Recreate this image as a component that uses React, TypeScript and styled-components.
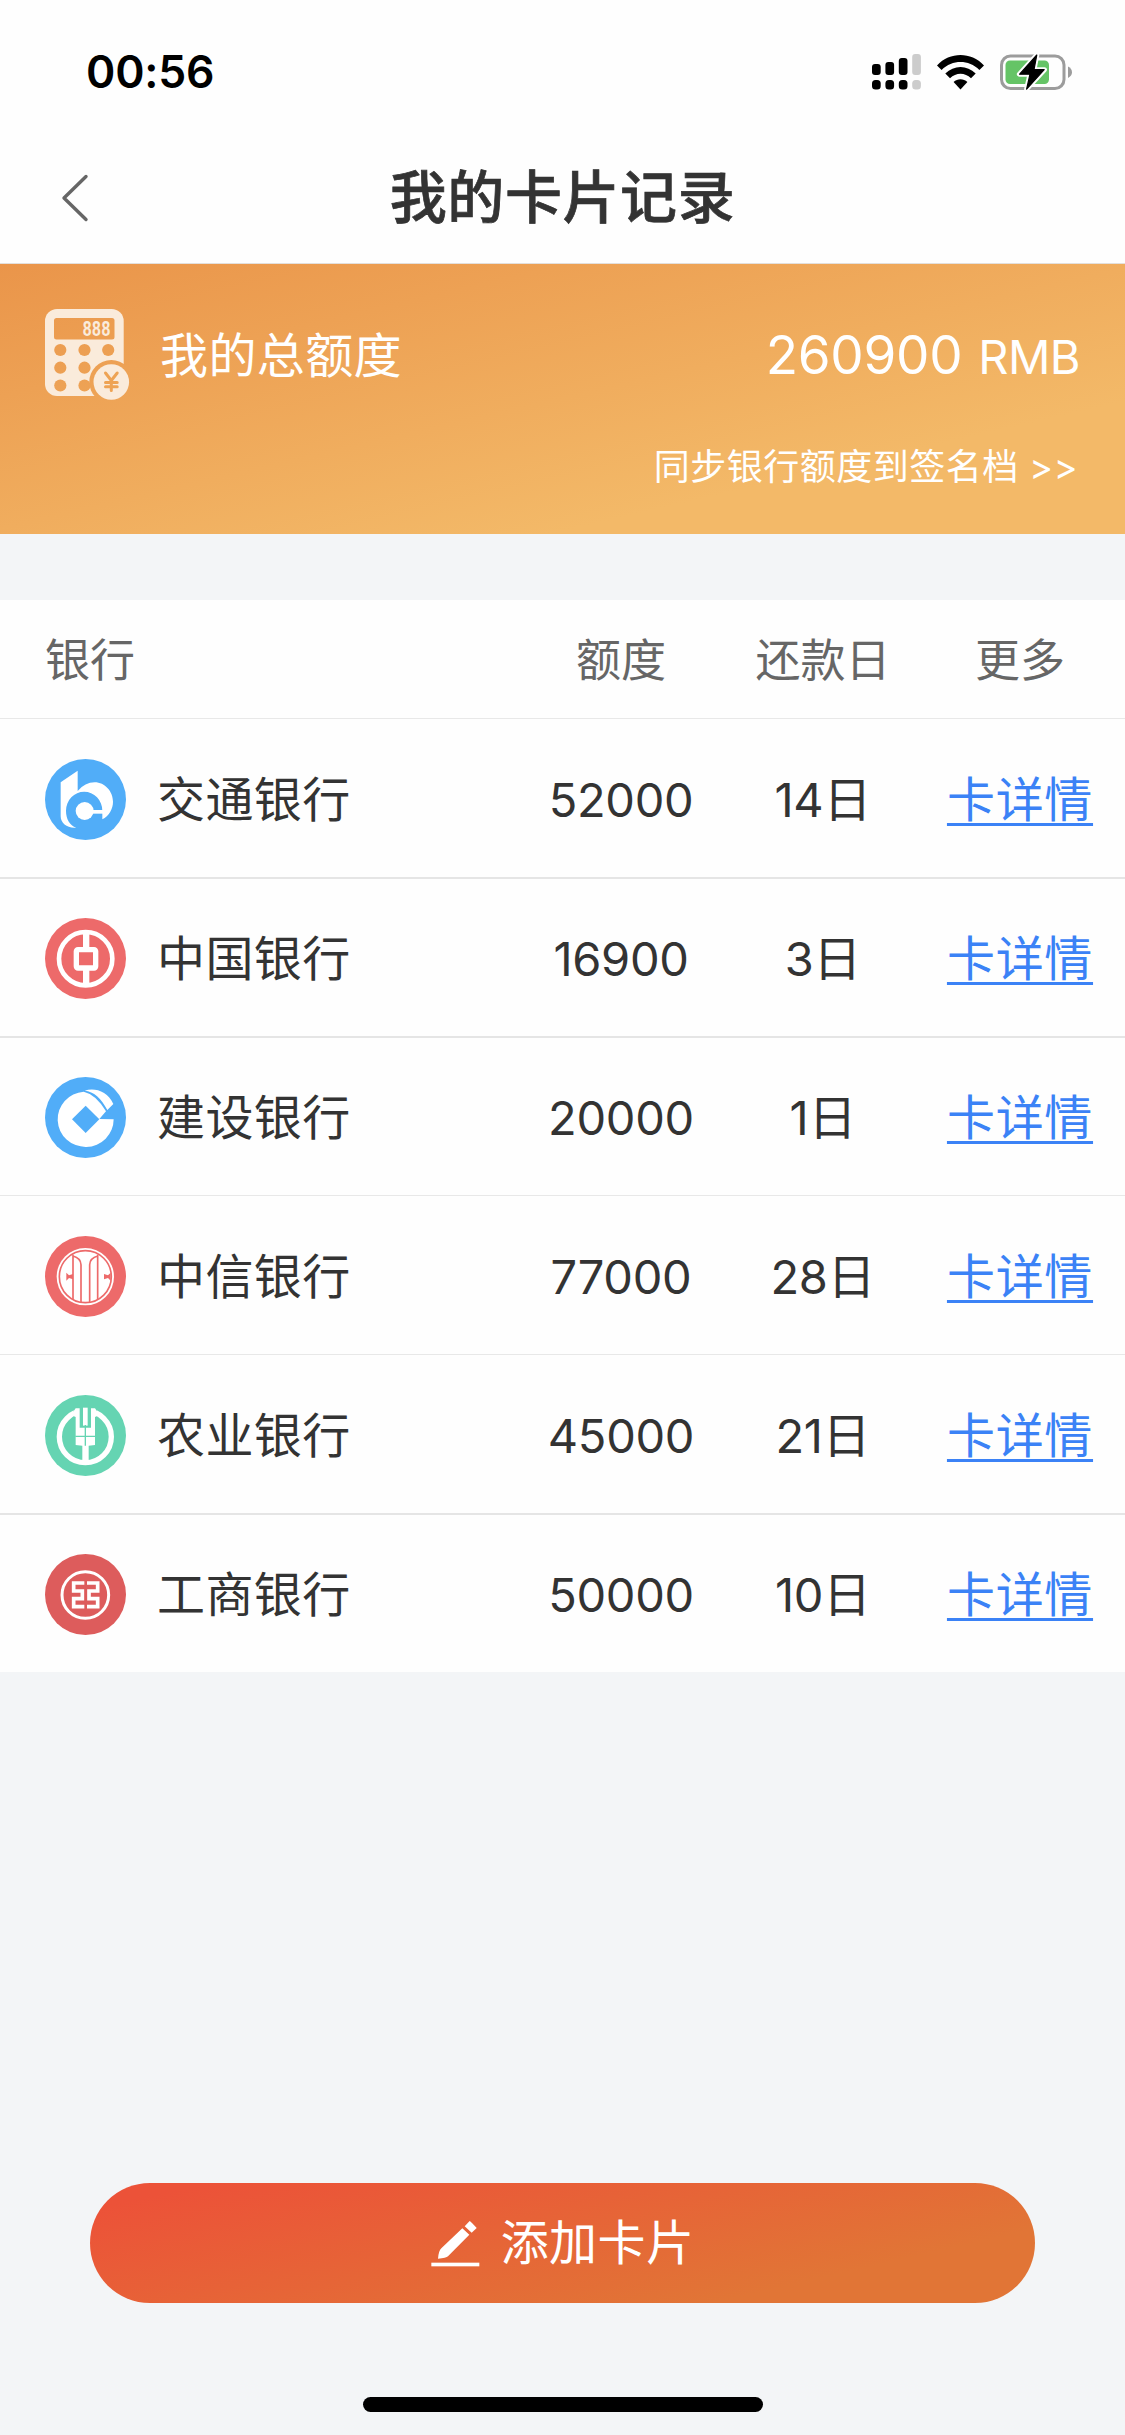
import React from "react";
import styled, { createGlobalStyle } from "styled-components";

const Global = createGlobalStyle`
  * { box-sizing: border-box; }
  body {
    margin: 0;
    background: #f3f5f7;
    font-family: Inter, "Noto Sans CJK SC", sans-serif;
    color: #333;
  }
`;

const Page = styled.div`
  width: 1125px;
  height: 2435px;
  display: flex;
  flex-direction: column;
  background: #f3f5f7;
  overflow: hidden;
`;

const Top = styled.header`
  height: 264px;
  background: #fefefe;
  border-bottom: 1px solid #e3dfdb;
`;

const StatusBar = styled.div`
  height: 144px;
  padding: 0 53px 0 86px;
  display: flex;
  align-items: center;
  justify-content: space-between;
`;

const Time = styled.span`
  font-size: 44.5px;
  font-weight: 600;
  line-height: 60px;
  letter-spacing: -0.2px;
  color: #000;
`;

const StatusIcons = styled.div`
  display: flex;
  align-items: center;
  gap: 16px;
`;

const NavBar = styled.div`
  height: 108px;
  padding: 0 61px;
  display: grid;
  grid-template-columns: 50px 1fr 50px;
  align-items: center;
`;

const Title = styled.h1`
  margin: 0;
  text-align: center;
  font-size: 57px;
  line-height: 80px;
  font-weight: 500;
  letter-spacing: 0.6px;
  -webkit-text-stroke: 0.7px #333;
  color: #333;
`;

const Summary = styled.section`
  height: 270px;
  padding: 45px 45px 0;
  background: linear-gradient(167deg, #ea954a 0%, #f3b968 75%);
  color: #fff;
`;

const SummaryRow = styled.div`
  height: 92px;
  display: flex;
  align-items: center;
`;

const SummaryLabel = styled.span`
  margin: 2px 0 0 30px;
  font-size: 48px;
  line-height: 60px;
  letter-spacing: 0.4px;
`;

const Amount = styled.span`
  margin: 2px 0 0 auto;
  font-size: 53px;
  line-height: 60px;
  letter-spacing: -0.3px;
`;

const Currency = styled.span`
  margin-left: 16px;
  font-size: 47px;
  letter-spacing: -0.6px;
`;

const SyncLink = styled.a`
  display: block;
  margin-top: 39px;
  padding-right: 2px;
  text-align: right;
  font-size: 36px;
  line-height: 54px;
  letter-spacing: 0.5px;
`;

const Table = styled.section`
  margin-top: 66px;
  background: #fefefe;
`;

const Line = styled.div`
  display: grid;
  grid-template-columns: 1fr 200px 204px 190px;
  align-items: center;
  padding: 0 10px 0 45px;
`;

const HeadLine = styled(Line)`
  height: 118px;
  padding-top: 3px;
  font-size: 45px;
  line-height: 60px;
  color: #666;
`;

const BankLine = styled(Line)<{ $strong: boolean }>`
  height: 159px;
  padding-top: ${(p) => (p.$strong ? "1px" : "2px")};
  border-top: ${(p) => (p.$strong ? "2px solid #e5e5e5" : "1px solid #e8e8e8")};
  font-size: 48px;
  line-height: 60px;
`;

const Cell = styled.div`
  padding-top: 1px;
  text-align: center;
  white-space: nowrap;
`;

const Bank = styled.div`
  display: flex;
  align-items: center;
  gap: 31px;
`;

const BankName = styled.span`
  padding-top: 2px;
  letter-spacing: 0.4px;
`;

const Num = styled.span`
  font-size: 47px;
  letter-spacing: -0.3px;
`;

const Detail = styled.a`
  display: inline-block;
  color: #3b82f6;
  letter-spacing: 0.7px;
  text-decoration: underline;
  text-decoration-thickness: 3px;
  text-underline-offset: 6px;
`;

const Footer = styled.footer`
  margin-top: auto;
  height: 252px;
  display: flex;
  flex-direction: column;
  align-items: center;
`;

const AddButton = styled.button`
  width: 945px;
  height: 120px;
  border: 0;
  border-radius: 60px;
  background: linear-gradient(167deg, #ec5238 8%, #e17536 78%);
  color: #fff;
  font: inherit;
  font-size: 48px;
  line-height: 60px;
  letter-spacing: 0.4px;
  display: flex;
  align-items: center;
  justify-content: center;
  gap: 21px;
`;

const HomeBar = styled.div`
  margin-top: 94px;
  width: 400px;
  height: 15px;
  border-radius: 8px;
  background: #000;
`;

const Signal = () => (
  <svg width="49" height="36" viewBox="0 0 49 36">
    {[10, 8, 4, 0].map((y, i) => (
      <g key={y} fill={i === 3 ? "#ccc" : "#000"}>
        <rect x={i * 13.4} y={y} width="8.7" height={21 - y} rx="3" />
        <rect x={i * 13.4} y="26" width="8.7" height="9.4" rx="3.5" />
      </g>
    ))}
  </svg>
);

const Wifi = () => (
  <svg width="47" height="35" viewBox="0 0 47 35">
    <path d="M0 10.4C13-3.4 34-3.4 47 10.4L42.4 15C31.5 4.4 15.5 4.4 4.6 15Z" />
    <path d="M8.3 18.6C17 9.8 30 9.8 38.7 18.6L34 23.2C28 17.2 19 17.2 13 23.2Z" />
    <path d="M16.6 27C20.5 23.4 26.5 23.4 30.4 27L23.5 34.4Z" />
  </svg>
);

const Battery = () => (
  <svg width="72" height="40" viewBox="0 0 72 40">
    <rect x="1.5" y="4" width="62.5" height="32.5" rx="9" fill="none" stroke="#9c9c9c" strokeWidth="3" />
    <rect x="5.5" y="8.5" width="43.5" height="23.5" rx="4.5" fill="#65c466" />
    <path d="M68 14.5Q72 16.5 72 20.3Q72 24 68 26Z" fill="#9c9c9c" />
    <path
      d="M36.8 3L19.4 22.2H30L26.6 37L44.4 17.7H34Z"
      stroke="#fefefe"
      strokeWidth="5"
      strokeLinejoin="round"
      fill="#fefefe"
    />
    <path
      d="M36.8 3L19.6 22.2H30L26.6 37.2L44.2 17.7H34Z"
      stroke="#000"
      strokeWidth="1.2"
      strokeLinejoin="round"
    />
  </svg>
);

const Back = () => (
  <svg width="28" height="48" viewBox="0 0 28 48" fill="none" stroke="#666" strokeWidth="3.4" strokeLinecap="round" strokeLinejoin="round">
    <path d="M25 2.5L3 24L25 45.5" />
  </svg>
);

const Calculator = () => (
  <svg width="85" height="92" viewBox="0 0 85 92">
    <mask id="keys">
      <rect width="85" height="92" fill="#fff" />
      <rect x="9" y="9" width="60.5" height="21.5" rx="2.5" fill="#000" />
      {[41, 58.7, 76.5].map((y) =>
        [15.3, 39.5, 63.2].map((x) => <circle key={`${x}-${y}`} cx={x} cy={y} r="6.1" fill="#000" />)
      )}
      <circle cx="66.3" cy="73" r="22" fill="#000" />
    </mask>
    <rect width="78.7" height="87" rx="12" fill="#faebdb" mask="url(#keys)" />
    <text x="37.5" y="27.2" fontFamily="Liberation Mono" fontWeight="700" fontSize="21.5" textLength="28" lengthAdjust="spacingAndGlyphs" fill="#faebdb">
      888
    </text>
    <circle cx="66.3" cy="73" r="17.8" fill="#faebdb" />
    <path d="M60.5 64L66.3 71.5L72.2 64M66.3 71.5V81.5M60.5 73.4H72.2M60.5 77.7H72.2" fill="none" stroke="#eea354" strokeWidth="3" strokeLinecap="round" />
  </svg>
);

const Pencil = () => (
  <svg width="49" height="47" viewBox="0 0 147 141" fill="#fff">
    <path d="M116 3Q118 3 137 24L122 38L101 19Z" />
    <path d="M94 25L115 44L51 109Q46 114 21 116Q23 92 31 85Z" />
    <rect x="1" y="128" width="144" height="11" />
  </svg>
);

const Comm = () => (
  <g fill="#fff">
    <path d="M47 70L98 35V96Q120 70 149 70C180 70 204 98 204 128C204 150 192 170 172 181V155A54 56 0 0 0 63 155C63 180 74 199 94 206C68 209 47 194 47 172Z" />
    <circle cx="119" cy="156" r="27" />
    <rect x="140" y="153" width="36" height="11" />
  </g>
);

const China = () => (
  <g fill="none" stroke="#fff">
    <circle cx="122" cy="122" r="80" strokeWidth="14" />
    <rect x="94" y="95" width="58" height="55" rx="5" strokeWidth="16" />
    <path d="M123.500 38V92M123.500 152V206" strokeWidth="19" />
  </g>
);

const Build = () => (
  <>
    <path d="M206 127A84 83 0 1 1 116 44Q153 52 183 103L163 126Z" fill="#fff" />
    <path d="M119 41C148 31 188 42 205 81L187 99C169 64 146 43 119 41Z" fill="#fff" />
    <path d="M122 86L163 127L122 168L81 127Z" fill="#51adf8" />
  </>
);

const Citic = () => (
  <>
    <circle cx="121" cy="122" r="86" fill="#fff" />
    <g fill="none" stroke="#ed6a6a" strokeWidth="5">
      <circle cx="121" cy="122" r="78" />
      <path d="M84 56V190M158 56V190M84 60Q107 66 108 86V198M158 60Q135 66 134 86V198" strokeWidth="5" />
    </g>
    <path d="M64 110L72 118L84 114V130L72 126L64 134ZM197 110L189 118L177 114V130L189 126L197 134Z" fill="#ed6a6a" />
  </>
);

const Agri = () => (
  <>
    <circle cx="121" cy="125" r="78" fill="none" stroke="#fff" strokeWidth="16" />
    <path d="M86 30H156V100H86Z" fill="#65d4b2" />
    <path d="M78 60L92 40H104V98H138V40H150L164 60L150 66V150L131 152V206H112V152L92 150V66Z" fill="#fff" />
    <path d="M106 34H135V95H106Z" fill="#65d4b2" />
    <path d="M114 38H128V92H114Z" fill="#fff" />
    <path d="M121 90V152M91 124H151" stroke="#65d4b2" strokeWidth="4" />
  </>
);

const Industry = () => (
  <g fill="none" stroke="#fff">
    <circle cx="121" cy="123" r="70" strokeWidth="9" />
    <path d="M118 87H86V111H112V134H86V158H118M126 87H158V111H132V134H158V158H126" strokeWidth="11" />
  </g>
);

const banks = [
  { name: "交通银行", limit: "52000", day: "14", color: "#51adf8", Mark: Comm, strong: false },
  { name: "中国银行", limit: "16900", day: "3", color: "#ed6a6a", Mark: China, strong: true },
  { name: "建设银行", limit: "20000", day: "1", color: "#51adf8", Mark: Build, strong: true },
  { name: "中信银行", limit: "77000", day: "28", color: "#ed6a6a", Mark: Citic, strong: false },
  { name: "农业银行", limit: "45000", day: "21", color: "#65d4b2", Mark: Agri, strong: false },
  { name: "工商银行", limit: "50000", day: "10", color: "#dd5c5c", Mark: Industry, strong: true },
];

export default function App() {
  return (
    <Page>
      <Global />
      <Top>
        <StatusBar>
          <Time>00:56</Time>
          <StatusIcons>
            <Signal />
            <Wifi />
            <Battery />
          </StatusIcons>
        </StatusBar>
        <NavBar>
          <Back />
          <Title>我的卡片记录</Title>
        </NavBar>
      </Top>
      <Summary>
        <SummaryRow>
          <Calculator />
          <SummaryLabel>我的总额度</SummaryLabel>
          <Amount>
            260900<Currency>RMB</Currency>
          </Amount>
        </SummaryRow>
        <SyncLink>同步银行额度到签名档 &gt;&gt;</SyncLink>
      </Summary>
      <Table>
        <HeadLine>
          <div>银行</div>
          <Cell>额度</Cell>
          <Cell>还款日</Cell>
          <Cell>更多</Cell>
        </HeadLine>
        {banks.map(({ name, limit, day, color, Mark, strong }) => (
          <BankLine key={name} $strong={strong}>
            <Bank>
              <svg width="81" height="81" viewBox="0 0 243 243">
                <circle cx="121.500" cy="121.500" r="121.500" fill={color} />
                <Mark />
              </svg>
              <BankName>{name}</BankName>
            </Bank>
            <Cell>
              <Num>{limit}</Num>
            </Cell>
            <Cell>
              <Num>{day}</Num>日
            </Cell>
            <Cell>
              <Detail>卡详情</Detail>
            </Cell>
          </BankLine>
        ))}
      </Table>
      <Footer>
        <AddButton>
          <Pencil />
          添加卡片
        </AddButton>
        <HomeBar />
      </Footer>
    </Page>
  );
}
